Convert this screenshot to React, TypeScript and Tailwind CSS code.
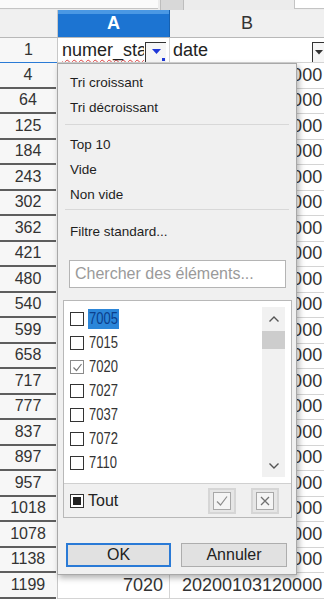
import React from "react";

const rows = [
  "4", "64", "125", "184", "243", "302", "362", "421", "480", "540", "599",
  "658", "717", "777", "837", "897", "957", "1018", "1078", "1138", "1199",
];

const items = [
  { v: "7005", checked: false, selected: true },
  { v: "7015", checked: false },
  { v: "7020", checked: true },
  { v: "7027", checked: false },
  { v: "7037", checked: false },
  { v: "7072", checked: false },
  { v: "7110", checked: false },
];

const CheckBox = ({ checked }: { checked?: boolean }) => (
  <div
    className={`w-[14px] h-[14px] border bg-white flex items-center justify-center shrink-0 ${
      checked ? "border-[#8a8a8a]" : "border-[#333]"
    }`}
  >
    {checked && (
      <svg width="11" height="11" viewBox="0 0 11 11">
        <path d="M1.5 5.5 L4.5 8.5 L9.5 2" fill="none" stroke="#777" strokeWidth="1.2" />
      </svg>
    )}
  </div>
);

const MenuItem = ({ label }: { label: string }) => (
  <div className="h-[25px] flex items-center pl-[12px] text-[13.5px] text-[#1e1e1e]">{label}</div>
);

const Chevron = ({ up }: { up?: boolean }) => (
  <svg width="12" height="8" viewBox="0 0 12 8">
    <path
      d={up ? "M1.5 6.5 L6 2 L10.5 6.5" : "M1.5 1.5 L6 6 L10.5 1.5"}
      fill="none"
      stroke="#555"
      strokeWidth="1.4"
    />
  </svg>
);

const App = () => {
  return (
    <div className="relative w-[324px] h-[599px] overflow-hidden bg-white font-['Liberation_Sans',Arial,sans-serif]">
      {/* bout de barre d'outils */}
      <div className="h-[10px] flex bg-[#ececec]">
        <div className="w-[158px] h-[9px] bg-[#fafafa] border-b border-[#c4c4c4]" />
        <div className="w-[24px] h-[10px] ml-[2px] bg-[#d8d8d8] border-x border-[#bdbdbd]" />
        <div className="w-[110px]" />
        <div className="flex-1 h-[9px] bg-white border-b border-l border-[#c4c4c4]" />
      </div>

      {/* en-têtes de colonnes */}
      <div className="h-[28px] flex border-b border-[#b8b8b8]">
        <div className="w-[58px] bg-[#f0f0f0] border-r border-[#c8c8c8]" />
        <div className="w-[112px] flex flex-col bg-[#1c74d2] border-r border-[#1560b0]">
          <div className="h-[6px] bg-[#4a98e4]" />
          <div className="flex-1 flex items-center justify-center text-white font-bold text-[18px] -mt-[4px]">
            A
          </div>
        </div>
        <div className="flex-1 flex items-center justify-center bg-[#f0f0f0] text-[#333] text-[18px]">
          B
        </div>
      </div>

      {/* ligne 1 */}
      <div className="h-[25px] flex">
        <div className="w-[58px] flex flex-col bg-[#f7f7f7] border-r border-[#c8c8c8]">
          <div className="flex-1 flex items-center justify-center text-[16px] text-[#333]">1</div>
          <div className="h-[2px] bg-[#2a7bd6]" />
        </div>
        <div className="w-[112px] flex items-center border-b border-r border-[#d4d4d4] overflow-hidden">
          <span className="pl-[4px] text-[18px] text-[#222] underline decoration-wavy decoration-[#e04040] decoration-1 underline-offset-[3px] whitespace-nowrap w-[86px] overflow-hidden">
            numer_sta
          </span>
          <div className="w-[21px] h-[20px] mt-[3px] ml-[1px] bg-[#f6f6f6] border-l border-t border-[#333] relative flex items-center justify-center">
            <svg width="9" height="6" viewBox="0 0 9 6">
              <path d="M0 0 L9 0 L4.5 5 Z" fill="#2038d8" />
            </svg>
            <div className="absolute right-[1px] bottom-[1px] w-[3px] h-[3px] bg-[#2038d8]" />
          </div>
        </div>
        <div className="flex-1 flex items-center justify-between border-b border-[#d4d4d4]">
          <span className="pl-[3px] text-[18px] text-[#222]">date</span>
          <div className="w-[12px] h-[20px] mt-[3px] bg-[#f6f6f6] border-l border-t border-[#333] flex items-center justify-center">
            <svg width="8" height="5" viewBox="0 0 8 5">
              <path d="M0 0 L8 0 L4 4.5 Z" fill="#333" />
            </svg>
          </div>
        </div>
      </div>

      {/* lignes de données */}
      {rows.map((r) => (
        <div key={r} className="h-[25.5px] flex">
          <div className="w-[58px] flex bg-[#f7f7f7] border-r border-[#c8c8c8]">
            <div className="w-[56px] flex items-center justify-center text-[16px] text-[#333] border-b-2 border-[#5e5e5e]">
              {r}
            </div>
          </div>
          <div className="w-[112px] flex items-center justify-end pr-[6px] border-b border-r border-[#d4d4d4] text-[18px] text-[#333]">
            7020
          </div>
          <div className="flex-1 flex items-center pl-[12px] border-b border-[#d4d4d4] overflow-hidden whitespace-nowrap text-[18px] text-[#333]">
            20200103120000
          </div>
        </div>
      ))}

      {/* menu d'autofiltre */}
      <div className="absolute left-[57px] top-[63px] w-[240px] h-[512px] bg-[#f0f0f0] border border-[#a8a8a8] shadow-[2px_3px_6px_rgba(0,0,0,0.3)] flex flex-col">
        <div className="pt-[7px]">
          <MenuItem label="Tri croissant" />
          <MenuItem label="Tri décroissant" />
        </div>
        <div className="mt-[3px] mx-[7px] h-px bg-[#d8d8d8]" />
        <div className="mt-[8px]">
          <MenuItem label="Top 10" />
          <MenuItem label="Vide" />
          <MenuItem label="Non vide" />
        </div>
        <div className="mt-[1px] mx-[7px] h-px bg-[#d8d8d8]" />
        <div className="mt-[10px]">
          <MenuItem label="Filtre standard..." />
        </div>

        <div className="mt-[15px] ml-[11px] w-[217px] h-[28px] bg-white border border-[#b4b4b4] flex items-center pl-[5px] text-[16px] text-[#9a9a9a] whitespace-nowrap">
          Chercher des éléments...
        </div>

        <div className="mt-[12px] ml-[5px] w-[229px] h-[218px] border border-[#b8b8b8] flex flex-col">
          <div className="h-[182px] bg-white flex">
            <div className="flex-1 pt-[6px]">
              {items.map((it) => (
                <div key={it.v} className="h-[24px] flex items-center pl-[6px]">
                  <CheckBox checked={it.checked} />
                  <span
                    className={`ml-[4px] px-[1px] leading-[16px] text-[13px] inline-block scale-y-125 ${
                      it.selected ? "bg-[#2b86d9] text-[#0b3f8c]" : "text-[#333]"
                    }`}
                  >
                    {it.v}
                  </span>
                </div>
              ))}
            </div>
            <div className="w-[23px] mr-[6px] my-[6px] bg-[#f1f1f1] flex flex-col items-center">
              <div className="h-[24px] flex items-center justify-center">
                <Chevron up />
              </div>
              <div className="w-full h-[18px] bg-[#cdcdcd]" />
              <div className="flex-1" />
              <div className="h-[22px] flex items-center justify-center">
                <Chevron />
              </div>
            </div>
          </div>
          <div className="flex-1 flex items-center border-t border-[#d0d0d0] pl-[6px]">
            <div className="w-[14px] h-[14px] border border-[#333] bg-white flex items-center justify-center">
              <div className="w-[8px] h-[8px] bg-[#222]" />
            </div>
            <span className="ml-[4px] text-[16px] text-[#222]">Tout</span>
            <div className="flex-1" />
            <div className="w-[28px] h-[26px] border-2 border-[#d6d6d6] bg-[#e6e6e6] flex items-center justify-center">
              <div className="w-[18px] h-[18px] border border-[#a8a8a8] bg-[#f4f4f4] flex items-center justify-center">
                <svg width="14" height="14" viewBox="0 0 14 14">
                  <path d="M2 7.5 L5.5 11 L12 2.5" fill="none" stroke="#8c8c8c" strokeWidth="1.2" />
                </svg>
              </div>
            </div>
            <div className="w-[28px] h-[26px] ml-[15px] mr-[12px] border-2 border-[#d6d6d6] bg-[#e6e6e6] flex items-center justify-center">
              <div className="w-[18px] h-[18px] border border-[#a8a8a8] bg-[#f4f4f4] flex items-center justify-center">
                <svg width="12" height="12" viewBox="0 0 12 12">
                  <path d="M2 2 L10 10 M10 2 L2 10" fill="none" stroke="#707070" strokeWidth="1.3" />
                </svg>
              </div>
            </div>
          </div>
        </div>

        <div className="mt-[25px] ml-[8px] flex gap-[10px]">
          <button className="w-[105px] h-[24px] bg-[#e1e1e1] border-2 border-[#2a7ad6] text-[16px] text-[#222] flex items-center justify-center">
            OK
          </button>
          <button className="w-[106px] h-[24px] bg-[#e1e1e1] border border-[#adadad] text-[16px] text-[#222] flex items-center justify-center">
            Annuler
          </button>
        </div>
      </div>
    </div>
  );
};

export default App;
